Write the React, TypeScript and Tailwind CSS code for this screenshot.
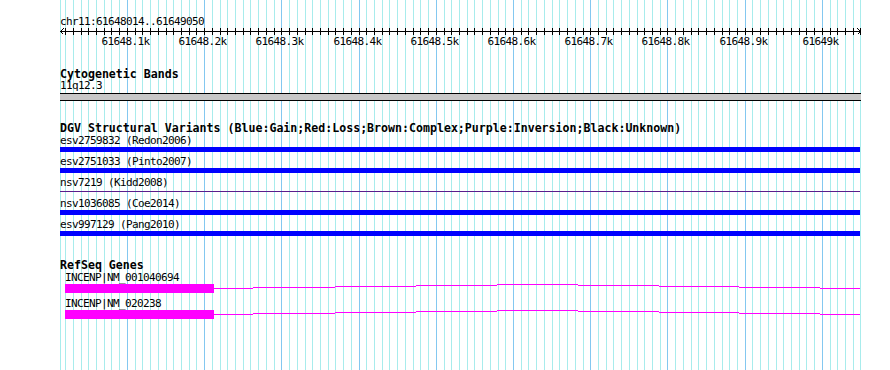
import React from "react";

const START = 61648014;
const END = 61649050;
const SCALE = 800 / (END - START);
const xOf = (bp: number) => Math.ceil(60 + (bp - START) * SCALE - 1e-6);

const grid: { x: number; major: boolean }[] = [{ x: 60, major: false }];
for (let bp = 61648020; bp <= END; bp += 10) {
  grid.push({ x: xOf(bp), major: bp % 100 === 0 });
}

const labels: { bp: number; text: string }[] = [
  { bp: 61648100, text: "61648.1k" },
  { bp: 61648200, text: "61648.2k" },
  { bp: 61648300, text: "61648.3k" },
  { bp: 61648400, text: "61648.4k" },
  { bp: 61648500, text: "61648.5k" },
  { bp: 61648600, text: "61648.6k" },
  { bp: 61648700, text: "61648.7k" },
  { bp: 61648800, text: "61648.8k" },
  { bp: 61648900, text: "61648.9k" },
  { bp: 61649000, text: "61649k" },
];

const dgv: { label: string; kind: "bar" | "line" }[] = [
  { label: "esv2759832 (Redon2006)", kind: "bar" },
  { label: "esv2751033 (Pinto2007)", kind: "bar" },
  { label: "nsv7219 (Kidd2008)", kind: "line" },
  { label: "nsv1036085 (Coe2014)", kind: "bar" },
  { label: "esv997129 (Pang2010)", kind: "bar" },
];

const genes = ["INCENP|NM_001040694", "INCENP|NM_020238"];

const segBounds = [214, 253, 335, 416, 497, 578, 659, 739, 820, 861];
const segOff = [0, -1, -2, -3, -4, -3, -2, -1, 0];

function Grid() {
  return (
    <svg className="absolute inset-0" width={890} height={370} shapeRendering="crispEdges">
      {grid
        .filter((g) => !g.major)
        .map((g, i) => (
          <rect key={"m" + i} x={g.x} y={0} width={1} height={370} fill="#a8ecec" />
        ))}
      {grid
        .filter((g) => g.major)
        .map((g, i) => (
          <rect key={"M" + i} x={g.x} y={0} width={1} height={370} fill="#84c8f0" />
        ))}
    </svg>
  );
}

function Ruler() {
  return (
    <svg width={890} height={23} className="block" shapeRendering="crispEdges">
      <rect x={60} y={4} width={801} height={1} fill="#000" />
      {grid.slice(1).map((g, i) => (
        <rect key={i} x={g.x} y={1} width={1} height={7} fill="#000" />
      ))}
      <path d="M63.5 1.5 L60.5 4.5 L63.5 7.5" stroke="#000" strokeWidth={1} fill="none" />
      <path d="M857.5 1.5 L860.5 4.5 L857.5 7.5" stroke="#000" strokeWidth={1} fill="none" />
      {labels.map((l) => (
        <text
          key={l.bp}
          x={xOf(l.bp) - 1.5}
          y={18}
          textAnchor="middle"
          fontFamily="'DejaVu Sans Mono', monospace"
          fontSize={11}
          letterSpacing={-0.62}
          fill="#000"
          shapeRendering="auto"
        >
          {l.text}
        </text>
      ))}
    </svg>
  );
}

function GeneModel() {
  return (
    <svg width={800} height={9} className="block" shapeRendering="crispEdges">
      <rect x={5} y={0} width={149} height={9} fill="#ff00ff" />
      {segOff.map((o, i) => (
        <rect
          key={i}
          x={segBounds[i] - 60}
          y={4 + o}
          width={segBounds[i + 1] - segBounds[i]}
          height={1}
          fill="#ff00ff"
        />
      ))}
    </svg>
  );
}

const small =
  "font-['DejaVu_Sans_Mono',monospace] text-[11px] tracking-[-0.62px] leading-[11px] h-[11px] whitespace-pre text-black";
const title =
  "font-['DejaVu_Sans_Mono',monospace] font-bold text-[11.6px] leading-[12px] h-[12px] whitespace-pre text-black";

export default function App() {
  return (
    <div className="relative w-[890px] h-[370px] overflow-hidden bg-white">
      <Grid />
      <div className="relative flex flex-col">
        <div className={`${small} mt-[16px] pl-[60px]`}>chr11:61648014..61649050</div>
        <Ruler />

        <div className={`${title} mt-[18px] pl-[60px]`}>Cytogenetic Bands</div>
        <div className={`${small} pl-[60px]`}>11q12.3</div>
        <div className="mt-[2px] ml-[60px] w-[801px] h-[8px] border-y border-black bg-[#c8c8c8]" />

        <div className={`${title} mt-[21px] pl-[60px]`}>
          DGV Structural Variants (Blue:Gain;Red:Loss;Brown:Complex;Purple:Inversion;Black:Unknown)
        </div>
        <div className="mt-[1px] flex flex-col gap-[4px] pl-[60px]">
          {dgv.map((r) => (
            <div key={r.label} className="flex flex-col">
              <div className={small}>{r.label}</div>
              {r.kind === "bar" ? (
                <div className="mt-[1px] w-[800px] h-[5px] bg-[#0000ff]" />
              ) : (
                <div className="mt-[1px] w-[800px] h-[5px] flex items-center">
                  <div className="w-[800px] h-[1px] bg-[#5a1e8c]" />
                </div>
              )}
            </div>
          ))}
        </div>

        <div className={`${title} mt-[23px] pl-[60px]`}>RefSeq Genes</div>
        <div className="mt-[1px] flex flex-col gap-[5px] pl-[60px]">
          {genes.map((g) => (
            <div key={g} className="flex flex-col">
              <div className={`${small} pl-[5px]`}>{g}</div>
              <div className="mt-[1px]">
                <GeneModel />
              </div>
            </div>
          ))}
        </div>
      </div>
    </div>
  );
}
